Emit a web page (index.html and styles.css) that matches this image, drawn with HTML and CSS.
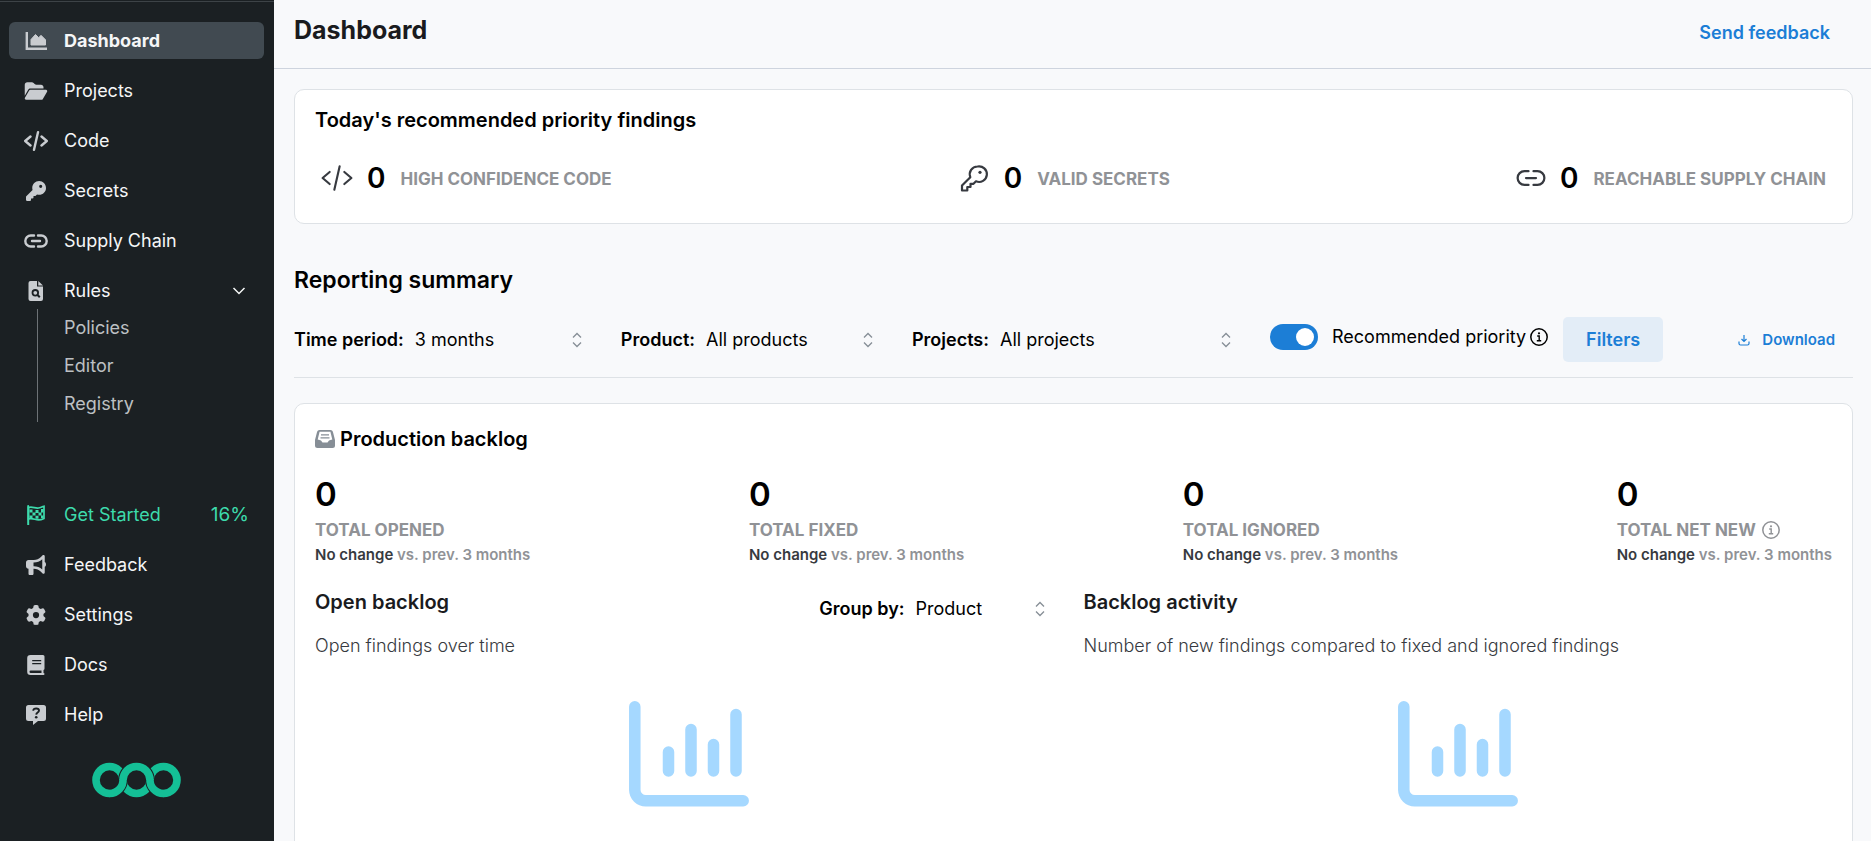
FILE: index.html
```html
<!DOCTYPE html>
<html lang="en">
<head>
<meta charset="utf-8">
<title>Dashboard</title>
<link rel="stylesheet" href="styles.css">
</head>
<body>
<svg class="defs" aria-hidden="true">
  <symbol id="i-link" viewBox="0 0 24 24"><path d="M10 6.500H6.800a5.500 5.500 0 0 0 0 11H10M14 6.500h3.200a5.500 5.500 0 0 1 0 11H14M8 12h8" fill="none" stroke="currentColor" stroke-linecap="round"/></symbol>
  <symbol id="i-code" viewBox="0 0 24 24"><path d="M6.500 7.500 1.200 12l5.300 4.500M17.500 7.500l5.300 4.500-5.300 4.500M14 3.200 10 20.800" fill="none" stroke="currentColor" stroke-linecap="round" stroke-linejoin="round"/></symbol>
  <symbol id="i-info" viewBox="0 0 18 18"><circle cx="9" cy="9" r="8.200" fill="none" stroke="currentColor" stroke-width="1.500"/><path d="M7.200 8h2v4.500M6.800 12.700h4.400" fill="none" stroke="currentColor" stroke-width="1.400"/><circle cx="9" cy="5.300" r="1.100" fill="currentColor"/></symbol>
  <symbol id="i-chart" viewBox="0 0 120 106"><path d="M5.800 5.800v83.200a11 11 0 0 0 11 10.800h97.400M39.500 51v19M62 28.500v41.500M84.500 43.500v26.500M107 13.500v56.500" fill="none" stroke="currentColor" stroke-width="11.500" stroke-linecap="round"/></symbol>
</svg>
<div class="app">
  <nav class="sidebar" aria-label="Main">
    <ul class="menu">
      <li><a class="item active" href="#">
        <svg class="icon" viewBox="0 0 22 20"><path d="M1.800 1v16.800H22" fill="none" stroke="currentColor" stroke-width="2.400"/><path d="M6 14V8.500l4.500-5 3.200 3.200L16 4.300l4.500 4.500V14z" fill="currentColor" stroke="currentColor" stroke-linejoin="round"/></svg>
        <span>Dashboard</span></a></li>
      <li><a class="item" href="#">
        <svg class="icon wide" viewBox="0 0 576 512"><path fill="currentColor" d="M88.700 223.800L0 375.800V96C0 60.700 28.700 32 64 32H181.500c17 0 33.300 6.700 45.300 18.700l26.500 26.500c12 12 28.300 18.700 45.300 18.700H416c35.300 0 64 28.700 64 64v32H144c-22.800 0-43.800 12.100-55.300 31.800zm27.600 16.100C122.100 230 132.600 224 144 224H544c11.500 0 22 6.100 27.700 16.100s5.700 22.200-.1 32.100l-112 192C453.900 474 443.400 480 432 480H32c-11.500 0-22-6.100-27.700-16.100s-5.700-22.200 .1-32.100l112-192z"/></svg>
        <span>Projects</span></a></li>
      <li><a class="item" href="#"><svg class="icon wide bold"><use href="#i-code"/></svg><span>Code</span></a></li>
      <li><a class="item" href="#">
        <svg class="icon" viewBox="0 0 512 512"><path fill="currentColor" d="M336 352c97.200 0 176-78.800 176-176S433.200 0 336 0S160 78.800 160 176c0 18.700 2.900 36.800 8.300 53.700L7 391c-4.500 4.500-7 10.600-7 17v80c0 13.300 10.700 24 24 24h80c13.300 0 24-10.700 24-24V448h40c13.300 0 24-10.700 24-24V384h40c6.400 0 12.500-2.500 17-7l33.300-33.300c16.900 5.400 35 8.300 53.700 8.300zM376 96a40 40 0 1 1 0 80 40 40 0 1 1 0-80z"/></svg>
        <span>Secrets</span></a></li>
      <li><a class="item" href="#"><svg class="icon wide bold"><use href="#i-link"/></svg><span>Supply Chain</span></a></li>
      <li>
        <a class="item" href="#" aria-expanded="true">
          <svg class="icon" viewBox="0 0 20 20"><path fill="currentColor" fill-rule="evenodd" d="M4.500 0H11v5.500h6V18a2 2 0 0 1-2 2H4.500a2 2 0 0 1-2-2V2a2 2 0 0 1 2-2zM12.300 0 17 4.500h-4.700z"/><circle cx="9.300" cy="11.800" r="2.800" fill="none" stroke="#1b2023" stroke-width="1.800"/><path d="m11.300 13.800 2.500 2.500" stroke="#1b2023" stroke-width="2"/></svg>
          <span>Rules</span>
          <svg class="chevron" viewBox="0 0 14 8"><path d="m1.500 1 5.500 5.500L12.500 1" fill="none" stroke="currentColor" stroke-width="1.500"/></svg>
        </a>
        <ul class="submenu">
          <li><a href="#">Policies</a></li>
          <li><a href="#">Editor</a></li>
          <li><a href="#">Registry</a></li>
        </ul>
      </li>
    </ul>
    <ul class="menu lower">
      <li><a class="item start" href="#">
        <svg class="icon" viewBox="0 0 20 20"><path d="M2.200 1v18.500" stroke="currentColor" stroke-width="2" stroke-linecap="round"/><path d="M2.500 2.600C6 1 9.500 3.800 12.500 3c2-.5 3.700-1.200 5.500-1.600v12c-2 1-3.800 1.500-5.500 1.500-3.500 0-6-2.200-10-.9z" fill="none" stroke="currentColor" stroke-width="1.700"/><path d="M3.500 4.500h3v3h-3zM9.500 5h3v3h-3zM6.500 7.500h3v3h-3zM12.500 7.500h3v3h-3zM3.500 10.500h3v3h-3zM9.500 10.700h3v3h-3zM15 4h2.500v3.500H15zM15 10.500h2.500V13H15z" fill="currentColor"/></svg>
        <span>Get Started</span><span class="progress">16%</span></a></li>
      <li><a class="item" href="#">
        <svg class="icon" viewBox="0 0 512 512"><path fill="currentColor" d="M480 32c0-12.900-7.800-24.600-19.800-29.600s-25.700-2.200-34.900 6.900L381.700 53c-48 48-113.100 75-181 75H192 160 64c-35.300 0-64 28.700-64 64v96c0 35.300 28.700 64 64 64l0 128c0 17.700 14.300 32 32 32h64c17.700 0 32-14.300 32-32V352l8.700 0c67.900 0 133 27 181 75l43.600 43.600c9.200 9.200 22.900 11.900 34.900 6.900s19.800-16.600 19.800-29.600V300.400c18.600-8.800 32-32.500 32-60.400s-13.400-51.600-32-60.400V32zm-64 76.700V240 371.300C357.200 317.800 280.500 288 200.700 288H192V192h8.700c79.800 0 156.500-29.800 215.300-83.300z"/></svg>
        <span>Feedback</span></a></li>
      <li><a class="item" href="#">
        <svg class="icon" viewBox="0 0 512 512"><path fill="currentColor" d="M495.900 166.600c3.200 8.700 .5 18.400-6.400 24.600l-43.300 39.400c1.100 8.300 1.700 16.800 1.700 25.400s-.6 17.100-1.700 25.400l43.300 39.400c6.900 6.200 9.600 15.900 6.400 24.600c-4.400 11.900-9.700 23.300-15.800 34.300l-4.700 8.100c-6.600 11-14 21.400-22.100 31.200c-5.900 7.200-15.700 9.600-24.500 6.800l-55.700-17.700c-13.400 10.300-28.200 18.900-44 25.400l-12.500 57.100c-2 9.100-9 16.300-18.200 17.800c-13.800 2.300-28 3.500-42.500 3.500s-28.700-1.200-42.500-3.500c-9.200-1.500-16.200-8.700-18.200-17.800l-12.500-57.100c-15.800-6.500-30.600-15.100-44-25.400L83.100 425.900c-8.800 2.800-18.600 .3-24.500-6.800c-8.100-9.800-15.500-20.200-22.100-31.200l-4.700-8.100c-6.100-11-11.400-22.400-15.800-34.300c-3.200-8.700-.5-18.400 6.400-24.600l43.300-39.400C64.600 273.100 64 264.600 64 256s.6-17.100 1.700-25.400L22.400 191.200c-6.900-6.200-9.600-15.900-6.400-24.600c4.400-11.900 9.700-23.300 15.800-34.300l4.700-8.100c6.600-11 14-21.400 22.100-31.200c5.900-7.200 15.700-9.600 24.500-6.800l55.700 17.700c13.400-10.300 28.200-18.900 44-25.400l12.500-57.100c2-9.100 9-16.300 18.200-17.800C227.300 1.200 241.500 0 256 0s28.700 1.200 42.500 3.500c9.200 1.500 16.200 8.700 18.200 17.800l12.500 57.100c15.800 6.500 30.600 15.100 44 25.400l55.700-17.700c8.800-2.800 18.600-.3 24.500 6.800c8.100 9.800 15.500 20.200 22.100 31.200l4.700 8.100c6.100 11 11.400 22.400 15.800 34.300zM256 336a80 80 0 1 0 0-160 80 80 0 1 0 0 160z"/></svg>
        <span>Settings</span></a></li>
      <li><a class="item" href="#">
        <svg class="icon" viewBox="0 0 20 20"><path fill="currentColor" fill-rule="evenodd" d="M4.500 0H17a1.500 1.500 0 0 1 1.500 1.500v12A1.500 1.500 0 0 1 17.500 15v3a1 1 0 0 1 0 2h-13A3.300 3.300 0 0 1 1.200 16.700V3.300A3.300 3.300 0 0 1 4.500 0zM4.700 15.500a1.200 1.200 0 0 0 0 2.400H15.500v-2.400zM6.200 5v1.200h9V5zM6.200 8v1.200h9V8z"/></svg>
        <span>Docs</span></a></li>
      <li><a class="item" href="#">
        <svg class="icon" viewBox="0 0 20 20"><path fill="currentColor" d="M2.500 0h15A2.500 2.500 0 0 1 20 2.500v11a2.500 2.500 0 0 1-2.500 2.500H12l-5 4v-4H2.500A2.500 2.500 0 0 1 0 13.500v-11A2.500 2.500 0 0 1 2.500 0z"/><path d="M7.300 5.700c0-1.400 1-2.200 2.900-2.200 1.800 0 2.800.8 2.800 2.100 0 2.100-2.600 1.800-2.800 4" fill="none" stroke="#1b2023" stroke-width="1.900"/><circle cx="10.200" cy="12.200" r="1.300" fill="#1b2023"/></svg>
        <span>Help</span></a></li>
    </ul>
    <svg class="logo" viewBox="0 0 90 36" role="img" aria-label="Logo">
      <g fill="none" stroke="#14bf96" stroke-width="7.600">
        <circle cx="17.500" cy="18" r="13.500"/>
        <circle cx="44.500" cy="18" r="13.500"/>
        <circle cx="71.500" cy="18" r="13.500"/>
        <path d="M31 18a13.500 13.500 0 0 1 27 0" stroke="#1b2023" stroke-width="9.600"/>
        <path d="M31 18a13.500 13.500 0 0 1 27 0"/>
        <path d="M31 18A13.500 13.500 0 0 1 17.500 31.500M58 18A13.500 13.500 0 0 0 71.500 31.500" stroke="#1b2023" stroke-width="9.600"/>
        <path d="M31 17A13.500 13.500 0 0 1 17.500 31.500H17M58 17A13.500 13.500 0 0 0 71.500 31.500H72"/>
      </g>
    </svg>
  </nav>

  <main class="main">
    <header class="topbar">
      <h1>Dashboard</h1>
      <a class="feedback" href="#">Send feedback</a>
    </header>
    <div class="content">
      <section class="card priority">
        <h2>Today's recommended priority findings</h2>
        <div class="findings">
          <div class="finding"><svg class="big-icon"><use href="#i-code"/></svg><b>0</b><span>HIGH CONFIDENCE CODE</span></div>
          <div class="finding">
            <svg class="big-icon" viewBox="0 0 32 32"><path d="M19.500 4.500a7.800 7.800 0 1 1-1.500 14.800l-2.500 2.500h-3v3.200H9.300v3.500H4v-5l8.300-8.300A7.800 7.800 0 0 1 19.500 4.500z" fill="none" stroke="currentColor" stroke-width="2.200" stroke-linejoin="round"/><circle cx="22" cy="10.300" r="1.600" fill="currentColor"/></svg>
            <b>0</b><span>VALID SECRETS</span></div>
          <div class="finding"><svg class="big-icon link"><use href="#i-link"/></svg><b>0</b><span>REACHABLE SUPPLY CHAIN</span></div>
        </div>
      </section>

      <h2 class="report-title">Reporting summary</h2>
      <div class="filters">
        <div class="field"><label for="period">Time period:</label><span class="picker"><select id="period"><option>3 months</option></select><svg viewBox="0 0 10 16"><path d="m1 5.500 4-4 4 4M1 10.500l4 4 4-4"/></svg></span></div>
        <div class="field"><label for="product">Product:</label><span class="picker"><select id="product"><option>All products</option></select><svg viewBox="0 0 10 16"><path d="m1 5.500 4-4 4 4M1 10.500l4 4 4-4"/></svg></span></div>
        <div class="field"><label for="projects">Projects:</label><span class="picker long"><select id="projects"><option>All projects</option></select><svg viewBox="0 0 10 16"><path d="m1 5.500 4-4 4 4M1 10.500l4 4 4-4"/></svg></span></div>
        <div class="toggle"><input type="checkbox" role="switch" id="recommended" checked><label for="recommended">Recommended priority</label><svg class="info"><use href="#i-info"/></svg></div>
        <button class="filter-button" type="button">Filters</button>
        <button class="download" type="button"><svg viewBox="0 0 12 12"><path d="M6 1v6.500M3.500 5 6 7.500 8.500 5M1 7.500v2A1.500 1.500 0 0 0 2.500 11h7A1.500 1.500 0 0 0 11 9.500v-2" fill="none" stroke="currentColor" stroke-width="1.200"/></svg>Download</button>
      </div>

      <section class="card backlog">
        <h2><svg viewBox="0 0 20 18"><path fill="currentColor" fill-rule="evenodd" d="M4.500 0h11a2.500 2.500 0 0 1 2.400 1.800L20 10v5.500a2.500 2.500 0 0 1-2.500 2.500h-15A2.500 2.500 0 0 1 0 15.500V10l2.100-8.200A2.500 2.500 0 0 1 4.500 0zM4.600 1.800 2.700 9.500 6 10.500l1.500 2h5l1.500-2 3.300-1-1.900-7.700z"/><path d="M6 4.800h8M5.500 7.800h9" stroke="currentColor" stroke-width="1.300"/></svg>Production backlog</h2>
        <div class="totals">
          <div class="total"><b>0</b><h3>TOTAL OPENED</h3><p><em>No change</em> vs. prev. 3 months</p></div>
          <div class="total"><b>0</b><h3>TOTAL FIXED</h3><p><em>No change</em> vs. prev. 3 months</p></div>
          <div class="total"><b>0</b><h3>TOTAL IGNORED</h3><p><em>No change</em> vs. prev. 3 months</p></div>
          <div class="total"><b>0</b><h3>TOTAL NET NEW <svg class="info"><use href="#i-info"/></svg></h3><p><em>No change</em> vs. prev. 3 months</p></div>
        </div>
        <div class="charts">
          <section class="chart">
            <div class="chart-head">
              <div><h3>Open backlog</h3><p>Open findings over time</p></div>
              <div class="field"><label for="group">Group by:</label><span class="picker short"><select id="group"><option>Product</option></select><svg viewBox="0 0 10 16"><path d="m1 5.500 4-4 4 4M1 10.500l4 4 4-4"/></svg></span></div>
            </div>
            <svg class="placeholder"><use href="#i-chart"/></svg>
          </section>
          <section class="chart">
            <div class="chart-head">
              <div><h3>Backlog activity</h3><p>Number of new findings compared to fixed and ignored findings</p></div>
            </div>
            <svg class="placeholder"><use href="#i-chart"/></svg>
          </section>
        </div>
      </section>
    </div>
  </main>
</div>
</body>
</html>
```
FILE: styles.css
```css
* { box-sizing: border-box; }

body {
  margin: 0;
  background: #f8f9fb;
  color: #000;
  font: 400 18px/24px Inter, "Liberation Sans", sans-serif;
}

h1, h2, h3, p, ul { margin: 0; padding: 0; }
ul { list-style: none; }
a { color: inherit; text-decoration: none; }
button, select { font: inherit; color: inherit; border: 0; background: none; }
svg { flex: none; }
.defs { display: none; }

.app {
  display: flex;
  height: 100vh;
  overflow: hidden;
}

/* Sidebar */
.sidebar {
  display: flex;
  flex: none;
  flex-direction: column;
  width: 274px;
  padding: 20px 10px 0 9px;
  margin-top: 1px;
  border-top: 1px solid #3d4347;
  background: #1b2023;
  box-shadow: 0 -1px #1b2023;
  color: #f5f6f7;
}

.menu {
  display: flex;
  flex-direction: column;
  gap: 13px;
}

.item {
  display: flex;
  align-items: center;
  height: 37px;
  padding: 0 18px 0 16px;
  border-radius: 6px;
}

.item > span:first-of-type { margin-left: 17px; }
.item.active { background: #414a51; font-weight: 700; }
.item.start { padding-right: 15px; color: #3ddbac; }
.item.start .icon { color: inherit; }
.progress { margin-left: auto; font-size: 19px; }

.icon {
  width: 22px;
  height: 20px;
  color: #c9ccd0;
}

.icon.wide { width: 24px; margin: 0 -1px; }
.icon.bold { height: 24px; stroke-width: 2.400; }
.chevron { width: 14px; height: 8px; margin-left: auto; }

.submenu {
  display: flex;
  flex-direction: column;
  gap: 14px;
  margin-left: 28px;
  padding: 7px 0 6px 26px;
  border-left: 1px solid #6d7276;
  color: #bdc0c3;
}

.lower { margin-top: 74px; }

.logo {
  width: 90px;
  height: 36px;
  margin: 29px auto 0;
}

/* Page header */
.main { flex: 1; min-width: 0; }

.topbar {
  display: flex;
  align-items: baseline;
  justify-content: space-between;
  height: 69px;
  padding: 15px 41px 0 20px;
  border-bottom: 1px solid #ced4de;
}

h1 { color: #1a1b1e; font-size: 25px; font-weight: 700; line-height: 30px; }
.feedback { color: #1c7ed6; font-weight: 600; }

.content { padding: 20px 18px 0 20px; }

.card {
  padding: 0 20px;
  border: 1px solid #dee2e6;
  border-radius: 10px;
  background: #fff;
}

h2 { font-size: 20px; font-weight: 600; line-height: 28px; }

/* Priority findings */
.priority { padding-top: 16px; padding-bottom: 28px; }

.findings {
  display: flex;
  justify-content: space-between;
  margin-top: 26px;
  padding: 0 6px;
}

.finding { display: flex; align-items: center; height: 35px; }
.finding b { margin: 0 15px 0 14px; font-size: 28px; font-weight: 600; }
.finding span { padding-top: 3px; color: #909296; font-size: 17px; font-weight: 700; }
.big-icon { width: 32px; height: 32px; color: #373a40; stroke-width: 1.600; }
.big-icon.link { width: 30px; height: 30px; stroke-width: 1.800; }

/* Report filters */
.report-title { margin-top: 42px; font-size: 23px; }

.filters {
  display: flex;
  align-items: center;
  gap: 27px;
  margin-top: 23px;
  padding-bottom: 15px;
  border-bottom: 1px solid #dee2e6;
}

.field { display: flex; align-items: center; white-space: nowrap; }
.field label { font-weight: 600; }

.picker {
  display: flex;
  align-items: center;
  width: 190px;
  padding-right: 12px;
}

.picker.long { width: 254px; }
.picker.short { width: 152px; }

.picker select {
  flex: 1;
  min-width: 0;
  height: 40px;
  padding: 0 0 0 11px;
  appearance: none;
}

.picker svg {
  width: 10px;
  height: 16px;
  fill: none;
  stroke: #868e96;
  stroke-width: 1.300;
}

.toggle { display: flex; align-items: center; padding-bottom: 5px; white-space: nowrap; }
.toggle .info { margin-left: 4px; }

.toggle input {
  display: flex;
  align-items: center;
  justify-content: flex-end;
  width: 48px;
  height: 26px;
  margin: 0 14px 0 0;
  padding: 4px;
  border-radius: 13px;
  background: #1c7ed6;
  appearance: none;
}

.toggle input::before {
  width: 18px;
  height: 18px;
  border-radius: 50%;
  background: #fff;
  content: "";
}

.info { width: 18px; height: 18px; }

.filter-button {
  width: 100px;
  height: 45px;
  margin-left: -12px;
  border-radius: 5px;
  background: #e3edf7;
  color: #1c7ed6;
  font-weight: 600;
}

.download {
  display: flex;
  align-items: center;
  gap: 12px;
  margin-left: auto;
  padding: 0 18px 0 0;
  color: #1c7ed6;
  font-size: 15px;
  font-weight: 600;
}

.download svg { width: 12px; height: 12px; }

/* Backlog */
.backlog { margin-top: 25px; padding-top: 21px; padding-bottom: 60px; }
.backlog h2 { display: flex; align-items: center; gap: 5px; }
.backlog h2 svg { width: 20px; height: 18px; color: #868e96; }

.totals { display: flex; justify-content: space-between; margin-top: 21px; }
.total b { display: block; font-size: 33px; font-weight: 600; line-height: 40px; }

.total h3 {
  display: flex;
  align-items: center;
  gap: 6px;
  margin-top: 4px;
  color: #909296;
  font-size: 17px;
  font-weight: 700;
}

.total p { margin-top: 1px; color: #909296; font-size: 15px; font-weight: 600; }
.total em { color: #373a40; font-style: normal; }

.charts { display: flex; gap: 20px; margin-top: 21px; }
.chart { display: flex; flex: 1; flex-direction: column; align-items: center; min-width: 0; }
.chart-head { display: flex; align-items: flex-start; justify-content: space-between; width: 100%; padding-right: 7px; }
.chart-head h3 { color: #1a1b1e; font-size: 20px; font-weight: 600; line-height: 28px; }
.chart-head p { margin-top: 18px; color: #373a40; font-weight: 300; }
.chart-head .field { padding-top: 1px; }
.placeholder { width: 120px; height: 106px; margin-top: 43px; color: #a5d8ff; }
```
